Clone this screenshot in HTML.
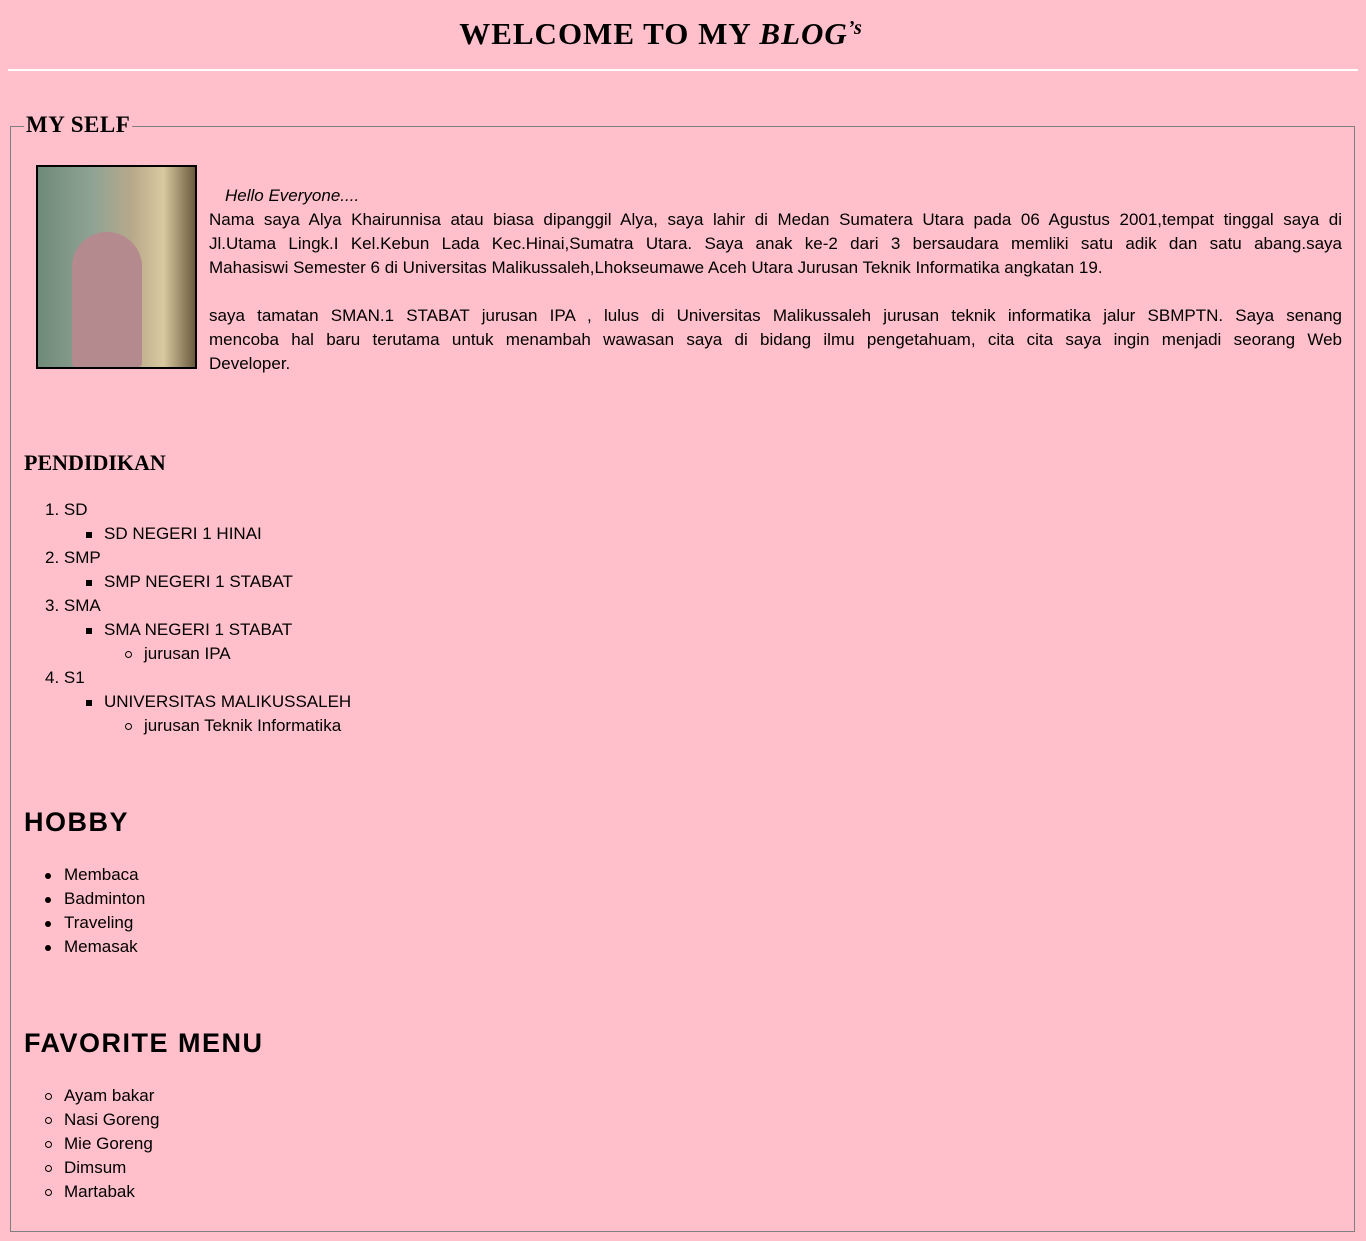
<!DOCTYPE html>
<html><head><meta charset="utf-8">
<style>
body{margin:0;background:#ffc0cb;width:1366px;height:1241px;position:relative;overflow:hidden;font-family:"Liberation Sans",sans-serif;color:#000}
.a{position:absolute;white-space:nowrap;font-size:17px;line-height:24px;margin-top:1px}
h1{position:absolute;margin:0;left:0;width:1322px;text-align:center;top:8px;font-family:"Liberation Serif",serif;font-size:31px;line-height:40px;font-weight:bold;letter-spacing:1px}
hr{position:absolute;margin:0;left:8px;width:1350px;top:69px;border:0;height:2px;background:#fff}
.fs{position:absolute;left:10px;top:126px;width:1343px;height:1104px;border:1px solid #808080}
.lg{position:absolute;left:24px;top:110px;padding:0 2px;background:#ffc0cb;font-family:"Liberation Serif",serif;font-weight:bold;font-size:23px;line-height:30px;letter-spacing:0.5px}
.img{position:absolute;left:36px;top:165px;width:157px;height:200px;border:2px solid #000;background:linear-gradient(90deg,#6f8a78 0%,#8fa394 35%,#b8a98a 60%,#d8c9a0 80%,#6b5a3e 100%)}
.fig{position:absolute;left:34px;top:65px;width:70px;height:135px;background:#b48a8e;border-radius:35px 35px 4px 4px}
.p{position:absolute;left:209px;width:1133px;font-size:17px;line-height:24px;text-align:justify;text-align-last:justify;margin-top:1px}
.serifh{position:absolute;font-family:"Liberation Serif",serif;font-weight:bold;font-size:22px;line-height:28px}
.h2{position:absolute;font-weight:bold;font-size:27px;line-height:32px;letter-spacing:1.5px}
.sq{display:inline-block;width:6px;height:6px;background:#000;position:absolute;left:-18px;top:10px}
.ci{display:inline-block;width:5px;height:5px;border:1px solid #000;border-radius:50%;position:absolute;left:-19px;top:9px}
.di{display:inline-block;width:6px;height:6px;background:#000;border-radius:50%;position:absolute;left:-19px;top:10px}
</style></head><body>
<h1>WELCOME TO MY <i>BLOG</i><i style="font-size:20px;vertical-align:10px">’s</i></h1>
<hr>
<div class="fs"></div>
<div class="lg">MY SELF</div>
<div class="img"><div class="fig"></div></div>
<div class="a" style="left:225px;top:183px;font-style:italic">Hello Everyone....</div>
<div class="p" style="top:207px">Nama saya Alya Khairunnisa atau biasa dipanggil Alya, saya lahir di Medan Sumatera Utara pada 06 Agustus 2001,tempat tinggal saya di</div>
<div class="p" style="top:231px">Jl.Utama Lingk.I Kel.Kebun Lada Kec.Hinai,Sumatra Utara. Saya anak ke-2 dari 3 bersaudara memliki satu adik dan satu abang.saya</div>
<div class="a" style="left:209px;top:255px">Mahasiswi Semester 6 di Universitas Malikussaleh,Lhokseumawe Aceh Utara Jurusan Teknik Informatika angkatan 19.</div>
<div class="p" style="top:303px">saya tamatan SMAN.1 STABAT jurusan IPA , lulus di Universitas Malikussaleh jurusan teknik informatika jalur SBMPTN. Saya senang</div>
<div class="p" style="top:327px">mencoba hal baru terutama untuk menambah wawasan saya di bidang ilmu pengetahuam, cita cita saya ingin menjadi seorang Web</div>
<div class="a" style="left:209px;top:351px">Developer.</div>

<div class="serifh" style="left:24px;top:449px">PENDIDIKAN</div>
<div class="a" style="left:45px;top:497px">1. SD</div>
<div class="a" style="left:104px;top:521px"><span class="sq"></span>SD NEGERI 1 HINAI</div>
<div class="a" style="left:45px;top:545px">2. SMP</div>
<div class="a" style="left:104px;top:569px"><span class="sq"></span>SMP NEGERI 1 STABAT</div>
<div class="a" style="left:45px;top:593px">3. SMA</div>
<div class="a" style="left:104px;top:617px"><span class="sq"></span>SMA NEGERI 1 STABAT</div>
<div class="a" style="left:144px;top:641px"><span class="ci"></span>jurusan IPA</div>
<div class="a" style="left:45px;top:665px">4. S1</div>
<div class="a" style="left:104px;top:689px"><span class="sq"></span>UNIVERSITAS MALIKUSSALEH</div>
<div class="a" style="left:144px;top:713px"><span class="ci"></span>jurusan Teknik Informatika</div>

<div class="h2" style="left:24px;top:806px">HOBBY</div>
<div class="a" style="left:64px;top:862px"><span class="di"></span>Membaca</div>
<div class="a" style="left:64px;top:886px"><span class="di"></span>Badminton</div>
<div class="a" style="left:64px;top:910px"><span class="di"></span>Traveling</div>
<div class="a" style="left:64px;top:934px"><span class="di"></span>Memasak</div>

<div class="h2" style="left:24px;top:1027px">FAVORITE MENU</div>
<div class="a" style="left:64px;top:1083px"><span class="ci"></span>Ayam bakar</div>
<div class="a" style="left:64px;top:1107px"><span class="ci"></span>Nasi Goreng</div>
<div class="a" style="left:64px;top:1131px"><span class="ci"></span>Mie Goreng</div>
<div class="a" style="left:64px;top:1155px"><span class="ci"></span>Dimsum</div>
<div class="a" style="left:64px;top:1179px"><span class="ci"></span>Martabak</div>
</body></html>
